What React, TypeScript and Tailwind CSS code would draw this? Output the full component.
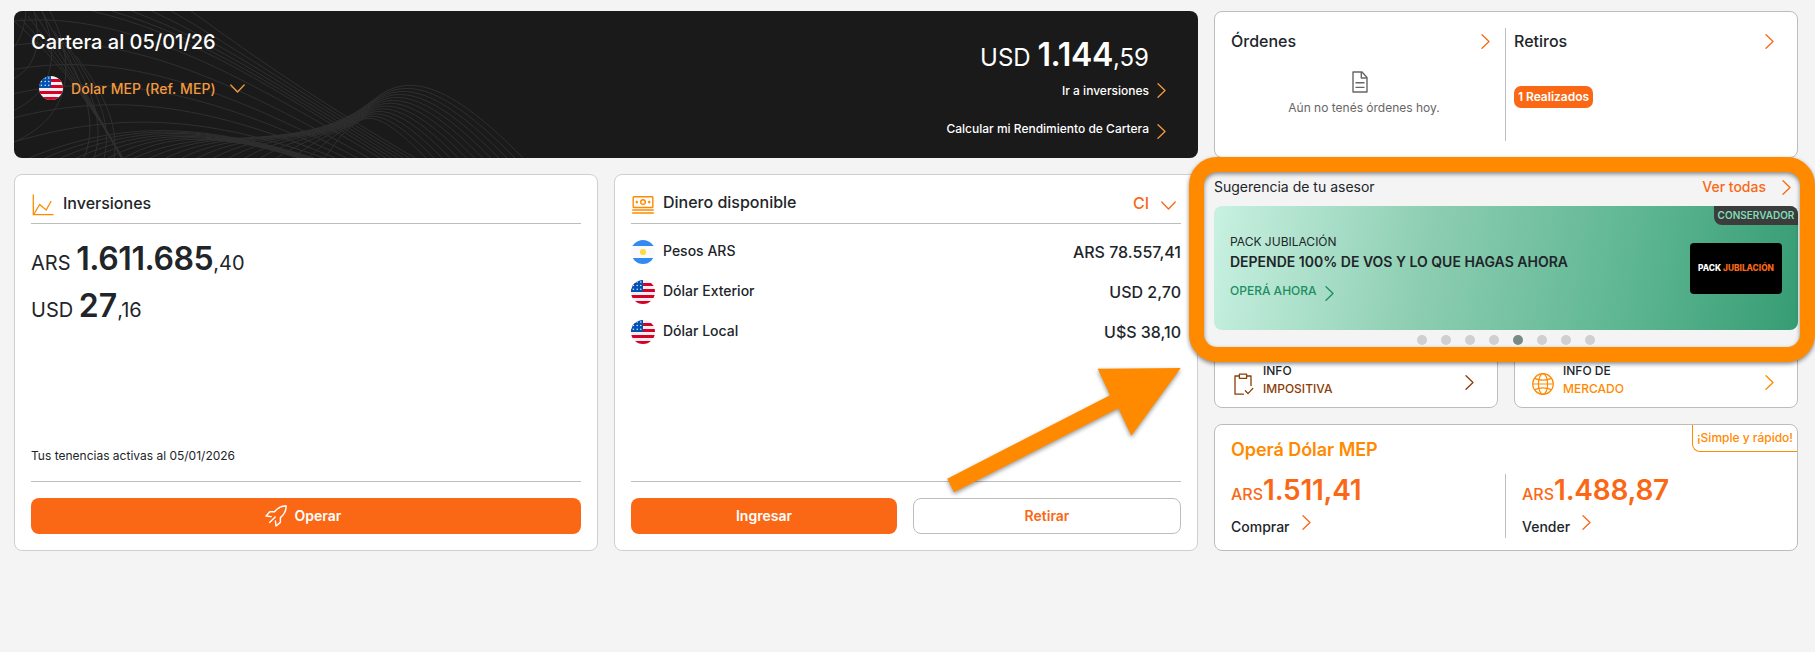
import { ReactNode } from 'react';

interface ChevronProps {
    className?: string;
}

const ChevronRight = ({ className = '' }: ChevronProps) => (
    <svg
        viewBox="0 0 9 15"
        className={`h-[15px] w-[9px] shrink-0 ${className}`}
        fill="none"
        stroke="currentColor"
        strokeWidth="1.3"
        strokeLinecap="round"
        strokeLinejoin="round"
    >
        <path d="M1 0.8 L8 7.5 L1 14.2" />
    </svg>
);

const ChevronDown = ({ className = '' }: ChevronProps) => (
    <svg
        viewBox="0 0 15 9"
        className={`h-[9px] w-[15px] shrink-0 ${className}`}
        fill="none"
        stroke="currentColor"
        strokeWidth="1.3"
        strokeLinecap="round"
        strokeLinejoin="round"
    >
        <path d="M0.8 1 L7.5 8 L14.2 1" />
    </svg>
);

const UsFlag = () => (
    <svg viewBox="0 0 24 24" className="h-6 w-6 shrink-0">
        <defs>
            <clipPath id="us-flag">
                <circle cx="12" cy="12" r="12" />
            </clipPath>
        </defs>
        <g clipPath="url(#us-flag)">
            <rect width="24" height="24" fill="#f0f0f0" />
            {[3, 9, 15, 21].map((y) => (
                <rect key={y} y={y} width="24" height="3" fill="#d80027" />
            ))}
            <rect width="12" height="12" fill="#0052b4" />
            {[2, 5.6, 9.2].map((y) =>
                [2.4, 6.2, 9.8].map((x) => (
                    <circle key={`${x}-${y}`} cx={x} cy={y} r="0.75" fill="#f0f0f0" />
                )),
            )}
        </g>
    </svg>
);

const ArgentinaFlag = () => (
    <svg viewBox="0 0 24 24" className="h-6 w-6 shrink-0">
        <defs>
            <clipPath id="ar-flag">
                <circle cx="12" cy="12" r="12" />
            </clipPath>
        </defs>
        <g clipPath="url(#ar-flag)">
            <rect width="24" height="24" fill="#fafafa" />
            <rect width="24" height="6" fill="#338af3" />
            <rect y="18" width="24" height="6" fill="#338af3" />
            <circle cx="12" cy="12" r="3.1" fill="#ffda44" />
        </g>
    </svg>
);

const ChartIcon = () => (
    <svg
        viewBox="0 0 22 22"
        className="h-[22px] w-[22px]"
        fill="none"
        stroke="#ff8a00"
        strokeWidth="1.3"
    >
        <path d="M1.3 0.5 V20.7 H21.5" />
        <path d="M2 20 L7.7 10.5 L14.2 16 L19.2 7" />
    </svg>
);

const CashIcon = () => (
    <svg
        viewBox="0 0 22 18"
        className="h-[18px] w-[22px]"
        fill="none"
        stroke="#ff8a00"
        strokeWidth="1.4"
    >
        <rect x="1.2" y="0.7" width="19.6" height="10.8" rx="0.6" />
        <circle cx="11" cy="6.1" r="2.3" />
        <path
            d="M3.2 6.1 l1.6 -1.6 l1.6 1.6 l-1.6 1.6 z M15.6 6.1 l1.6 -1.6 l1.6 1.6 l-1.6 1.6 z"
            fill="#ff8a00"
            stroke="none"
        />
        <path d="M0.2 14 H21.8 M0.2 17 H21.8" />
    </svg>
);

const RocketIcon = () => (
    <svg
        viewBox="0 0 22 22"
        className="h-[22px] w-[22px]"
        fill="none"
        stroke="white"
        strokeWidth="1.4"
        strokeLinejoin="round"
        strokeLinecap="round"
    >
        <path d="M21 1 C16.5 0.6 13 2.4 9.6 6.8 H4.8 L1 11 L6.2 11.6" />
        <path d="M21 1 C21.4 5.5 19.6 9 15.4 12.6 V17.4 L11 21 L10.4 16" />
        <path d="M4.6 17.6 L10.2 12" />
    </svg>
);

const DocumentIcon = () => (
    <svg
        viewBox="0 0 16 22"
        className="h-[22px] w-4"
        fill="none"
        stroke="#666"
        strokeWidth="1.4"
        strokeLinejoin="round"
    >
        <path d="M1 1 H10 L15 6.5 V21 H1 Z" />
        <path d="M9.3 1 V7 H15" />
        <path d="M3.5 11.8 H12.5 M3.5 16.4 H12.5" />
    </svg>
);

const ClipboardIcon = () => (
    <svg
        viewBox="0 0 20 22"
        className="ml-0.5 h-[22px] w-5"
        fill="none"
        stroke="#8b3d06"
        strokeWidth="1.3"
        strokeLinejoin="round"
        strokeLinecap="round"
    >
        <path d="M5.2 3 H1 V21.2 H9.5" />
        <path d="M12.8 3 H17 V12.5" />
        <path d="M5.4 5.3 V1.2 H12.6 V5.3 Z" />
        <path d="M11.4 17.7 L14 20.6 L18.8 15.4" />
    </svg>
);

const GlobeIcon = () => (
    <svg
        viewBox="0 0 22 22"
        className="h-[22px] w-[22px]"
        fill="none"
        stroke="#ff8a00"
        strokeWidth="1.2"
    >
        <circle cx="11" cy="11" r="10.3" />
        <ellipse cx="11" cy="11" rx="4.6" ry="10.3" />
        <path d="M0.7 11 H21.3 M2.6 5.4 Q11 9 19.4 5.4 M2.6 16.6 Q11 13 19.4 16.6" />
    </svg>
);

// Blends two control point lists into `count` intermediate curves.
const blend = (from: number[], to: number[], count: number) =>
    Array.from({ length: count }, (_, i) => {
        const k = i / (count - 1);
        const p = from.map((v, j) => (v + (to[j] - v) * k).toFixed(1));
        let d = `M${p[0]} ${p[1]}`;
        for (let j = 2; j < p.length; j += 6) {
            d += ` C${p.slice(j, j + 6).join(' ')}`;
        }
        return d;
    });

const waves = [
    // crest on the right
    ...blend(
        [120, 147, 170, 125, 210, 129, 245, 126, 300, 122, 330, 112, 358, 90, 388, 65, 425, 61, 509, 147],
        [310, 147, 318, 138, 322, 130, 328, 124, 334, 118, 340, 112, 350, 108, 366, 104, 385, 120, 412, 147],
        13,
    ),
    // straight run from the top edge
    ...blend(
        [177, 0, 235, 42, 300, 88, 401, 147],
        [78, 0, 180, 24, 260, 78, 372, 147],
        6,
    ),
    // wide arcs
    ...blend(
        [0, 10, 110, 0, 220, 60, 366, 147],
        [0, 131, 110, 98, 200, 108, 310, 147],
        6,
    ),
    ...blend(
        [15, 147, 110, 108, 190, 113, 300, 147],
        [110, 147, 150, 124, 200, 120, 285, 147],
        7,
    ),
    // bundle crossing on the left
    ...blend(
        [28, 0, 60, 60, 78, 95, 109, 147],
        [0, 10, 40, 45, 80, 95, 107, 147],
        5,
    ),
    ...blend(
        [36, 0, 62, 50, 60, 105, 0, 131],
        [12, 0, 10, 20, 6, 28, 0, 36],
        4,
    ),
    ...blend(
        [40, 20, 70, 70, 85, 110, 70, 147],
        [62, 45, 96, 90, 104, 120, 100, 147],
        4,
    ),
];

const WavePattern = () => (
    <svg
        viewBox="0 0 520 147"
        className="absolute top-0 left-0 h-[147px] w-[520px]"
        fill="none"
        stroke="#303030"
        strokeWidth="1"
    >
        {waves.map((d, i) => (
            <path key={i} d={d} />
        ))}
    </svg>
);

interface CardProps {
    className?: string;
    children: ReactNode;
}

const Card = ({ className = '', children }: CardProps) => (
    <div className={`rounded-lg border bg-white ${className}`}>{children}</div>
);

const PortfolioHeader = () => (
    <div className="relative flex h-[147px] w-[1184px] justify-between overflow-hidden rounded-lg bg-[#1a1a1a] pr-8 pl-[17px] text-white">
        <WavePattern />
        <div className="relative pt-4">
            <h1 className="text-xl leading-[30px] font-medium">Cartera al 05/01/26</h1>
            <div className="mt-[19px] flex h-6 items-center pl-2 text-[#f39a3e]">
                <UsFlag />
                <span className="mt-0.5 ml-2 text-sm font-medium tracking-[0.08px]">
                    Dólar MEP (Ref. MEP)
                </span>
                <ChevronDown className="ml-3.5" />
            </div>
        </div>
        <div className="relative flex flex-col items-end pt-[23px] text-xs font-medium">
            <div className="pr-[17px] text-2xl leading-[42px] font-normal">
                USD <span className="text-[32px] font-semibold tracking-[-0.3px]">1.144</span>,59
            </div>
            <div className="mt-1 flex h-4 items-center gap-2">
                Ir a inversiones
                <ChevronRight className="-mt-px text-[#f39a3e]" />
            </div>
            <div className="mt-[22px] flex h-4 items-center gap-2">
                Calcular mi Rendimiento de Cartera
                <ChevronRight className="mt-1 text-[#f39a3e]" />
            </div>
        </div>
    </div>
);

const Investments = () => (
    <Card className="flex h-[377px] w-[584px] flex-col border-[#cfcfcf] p-4">
        <div className="flex h-[33px] items-start gap-[9px] border-b border-[#bdbdbd]">
            <div className="mt-[3px] ml-px">
                <ChartIcon />
            </div>
            <h2 className="font-medium">Inversiones</h2>
        </div>
        <div className="mt-[11px] text-xl leading-[47px]">
            <div className="h-[47px]">
                ARS <span className="text-[32px] font-semibold tracking-[-0.4px]">1.611.685</span>,40
            </div>
            <div className="h-[47px]">
                USD <span className="text-[32px] font-semibold">27</span>,16
            </div>
        </div>
        <div className="mt-auto border-b border-[#bdbdbd] pb-[17px] text-xs">
            Tus tenencias activas al 05/01/2026
        </div>
        <button className="mt-4 flex h-9 shrink-0 items-center justify-center gap-2 rounded-lg bg-[#fa6816] pr-1.5 text-sm font-semibold text-white">
            <RocketIcon />
            Operar
        </button>
    </Card>
);

const balances = [
    { label: 'Pesos ARS', value: 'ARS 78.557,41', flag: <ArgentinaFlag /> },
    { label: 'Dólar Exterior', value: 'USD 2,70', flag: <UsFlag /> },
    { label: 'Dólar Local', value: 'U$S 38,10', flag: <UsFlag /> },
];

const AvailableMoney = () => (
    <Card className="flex h-[377px] w-[584px] flex-col border-[#cfcfcf] p-4">
        <div className="flex h-[33px] items-start border-b border-[#bdbdbd]">
            <div className="mt-[5px] ml-px">
                <CashIcon />
            </div>
            <h2 className="-mt-px ml-[9px] font-medium">Dinero disponible</h2>
            <div className="mr-[5px] ml-auto flex items-center gap-3 font-medium text-[#fa6816]">
                CI
                <ChevronDown className="mt-1" />
            </div>
        </div>
        <div className="mt-4 flex flex-col gap-4">
            {balances.map((b) => (
                <div key={b.label} className="flex h-6 items-center">
                    {b.flag}
                    <span className="-mt-0.5 ml-2 text-sm font-medium">{b.label}</span>
                    <span className="ml-auto font-medium">{b.value}</span>
                </div>
            ))}
        </div>
        <div className="mt-auto h-px bg-[#bdbdbd]" />
        <div className="mt-4 flex gap-4 text-sm font-semibold">
            <button className="h-9 w-[266px] rounded-lg bg-[#fa6816] text-white">Ingresar</button>
            <button className="h-9 flex-1 rounded-lg border border-[#bdbdbd] bg-white text-[#fa6816]">
                Retirar
            </button>
        </div>
    </Card>
);

const OrdersCard = () => (
    <Card className="flex h-[147px] border-[#bdbdbd] py-4">
        <div className="flex w-[291px] flex-col border-r border-[#bdbdbd] pl-4">
            <div className="flex h-[26px] items-center justify-between pr-[15px]">
                <h2 className="font-medium">Órdenes</h2>
                <ChevronRight className="text-[#fa6816]" />
            </div>
            <div className="mt-[17px] flex flex-col items-center pr-2 text-xs text-[#666]">
                <div className="-ml-2">
                    <DocumentIcon />
                </div>
                <span className="mt-[7px]">Aún no tenés órdenes hoy.</span>
            </div>
        </div>
        <div className="flex-1 pl-2">
            <div className="flex h-[26px] items-center justify-between pr-[23px]">
                <h2 className="font-medium">Retiros</h2>
                <ChevronRight className="text-[#fa6816]" />
            </div>
            <div className="mt-8 flex h-[22px] w-[79px] items-center justify-center rounded-[7px] bg-[#fa6816] text-xs font-semibold text-white">
                1 Realizados
            </div>
        </div>
    </Card>
);

const DOTS = 8;
const ACTIVE_DOT = 4;

const Suggestion = () => (
    <div className="mt-4">
        <div className="flex h-8 items-start justify-between pt-[3px] pr-[7px]">
            <span className="text-sm">Sugerencia de tu asesor</span>
            <span className="flex items-center gap-4 text-sm font-medium text-[#fa6816]">
                Ver todas
                <ChevronRight />
            </span>
        </div>
        <div className="relative flex h-[124px] items-center justify-between overflow-hidden rounded-lg bg-[linear-gradient(100deg,#c8f1e1_0%,#8ccdb1_37%,#5cb591_72%,#369c74_100%)] px-4">
            <div className="pb-[3px]">
                <div className="text-xs leading-[18px]">PACK JUBILACIÓN</div>
                <div className="text-sm leading-[22px] font-semibold">
                    DEPENDE 100% DE VOS Y LO QUE HAGAS AHORA
                </div>
                <div className="mt-[9px] flex items-center gap-2 text-xs leading-[18px] font-medium text-[#1c8e61]">
                    OPERÁ AHORA
                    <ChevronRight className="mt-1" />
                </div>
            </div>
            <div className="mt-px flex h-[51px] w-[92px] items-center justify-center gap-0.5 rounded bg-black text-[8.3px] font-extrabold text-white">
                PACK <span className="text-[#fa6816]">JUBILACIÓN</span>
            </div>
            <div className="absolute top-0 right-0 flex h-[19px] w-[84px] items-center justify-center rounded-bl-lg bg-[#3c3c3c] text-[10px] font-semibold text-[#7fdcb6]">
                CONSERVADOR
            </div>
        </div>
        <div className="flex h-5 items-center justify-center gap-3.5">
            {Array.from({ length: DOTS }, (_, i) => (
                <span
                    key={i}
                    className={`h-2.5 w-2.5 rounded-full ${i === ACTIVE_DOT ? 'bg-[#778a83]' : 'bg-[#cfcfcf]'}`}
                />
            ))}
        </div>
    </div>
);

interface InfoCardProps {
    icon: ReactNode;
    title: string;
    subtitle: string;
    color: string;
}

const InfoCard = ({ icon, title, subtitle, color }: InfoCardProps) => (
    <Card className="flex h-[58px] w-[284px] items-center border-[#bdbdbd] pr-[23px] pl-[17px]">
        <div className="mt-[9px] w-[31px] shrink-0">{icon}</div>
        <div className="mt-0.5 text-xs leading-[18px] font-medium">
            <div>{title}</div>
            <div className={color}>{subtitle}</div>
        </div>
        <ChevronRight className={`mt-1.5 ml-auto ${color}`} />
    </Card>
);

const Quote = ({ price, action }: { price: string; action: string }) => (
    <div>
        <div className="leading-8 text-[#fa6816]">
            <span className="text-base font-medium">ARS</span>
            <span className="text-[28px] font-semibold tracking-[-0.25px]">{price}</span>
        </div>
        <div className="mt-[7px] flex items-start gap-3 text-sm font-medium">
            {action}
            <ChevronRight className="-mt-0.5 text-[#fa6816]" />
        </div>
    </div>
);

const DollarMep = () => (
    <Card className="relative mt-4 h-[127px] border-[#bdbdb8] px-4 pt-3">
        <h2 className="text-lg leading-[26px] font-semibold tracking-[-0.05px] text-[#ff8a00]">
            Operá Dólar MEP
        </h2>
        <div className="mt-[11px] flex h-[64px]">
            <div className="w-[275px] border-r border-[#bdbdbd]">
                <Quote price="1.511,41" action="Comprar" />
            </div>
            <div className="pl-4">
                <Quote price="1.488,87" action="Vender" />
            </div>
        </div>
        <div className="absolute top-0 right-0 flex h-[27px] w-[105px] items-center justify-center rounded-bl-lg border-b border-l border-[#ff8a00] text-xs font-medium text-[#ff8a00]">
            ¡Simple y rápido!
        </div>
    </Card>
);

export default function App() {
    return (
        <div className="relative flex h-[652px] w-[1815px] gap-4 overflow-hidden bg-[#f4f4f4] pt-[11px] pl-3.5 font-['Inter',sans-serif] text-[#212529]">
            <div className="flex flex-col gap-4">
                <PortfolioHeader />
                <div className="flex gap-4">
                    <Investments />
                    <AvailableMoney />
                </div>
            </div>
            <div className="w-[584px]">
                <OrdersCard />
                <Suggestion />
                <div className="flex gap-4">
                    <InfoCard
                        icon={<ClipboardIcon />}
                        title="INFO"
                        subtitle="IMPOSITIVA"
                        color="text-[#8b3d06]"
                    />
                    <InfoCard
                        icon={<GlobeIcon />}
                        title="INFO DE"
                        subtitle="MERCADO"
                        color="text-[#ff8a00]"
                    />
                </div>
                <DollarMep />
            </div>

            {/* highlight around the suggestion and the arrow that points at it */}
            <div className="absolute top-[157px] left-[1189px] h-[205px] w-[626px] rounded-[28px] border-[15px] border-[#ff8a00] drop-shadow-[0_2px_2px_rgba(0,0,0,0.45)]" />
            <svg
                viewBox="0 0 250 140"
                className="absolute top-[360px] left-[940px] h-[140px] w-[250px] drop-shadow-[0_2px_2px_rgba(0,0,0,0.4)]"
                fill="#ff8a00"
            >
                <path d="M7.3 118.7 L170 35.3 L157.7 8.7 L240.7 8 L191.3 75.7 L178.3 48.3 L14 132.3 Z" />
            </svg>
        </div>
    );
}
